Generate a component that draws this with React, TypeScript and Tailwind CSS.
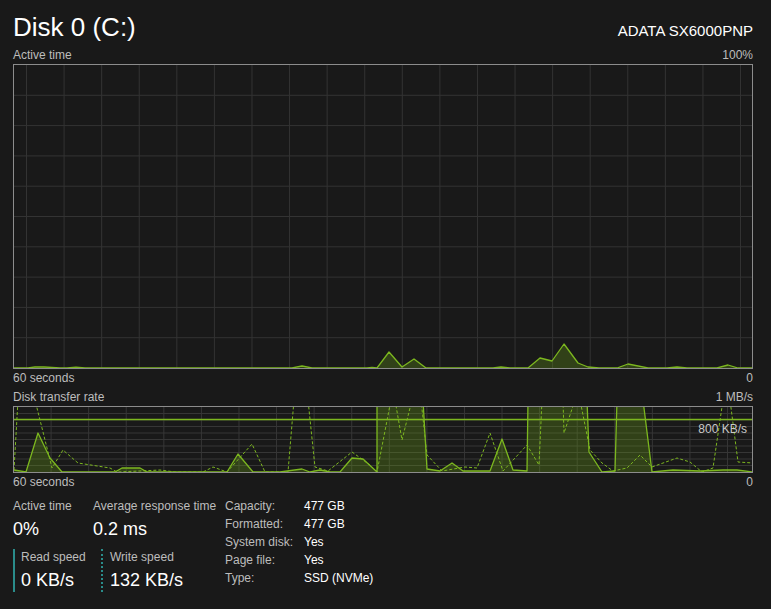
import React from "react";

type Pt = [number, number];

// page coords -> svg coords
const toSvg = (pts: Pt[], ox: number, oy: number) =>
  pts.map(([x, y]) => `${(x - ox).toFixed(1)},${(y - oy).toFixed(1)}`).join(" ");

const activePts: Pt[] = [
  [14, 368], [28, 368], [35, 367], [44, 367], [60, 368], [67, 368], [76, 367.2], [85, 368],
  [292, 368], [302, 366], [312, 368], [367, 368], [372, 367.3], [377, 368], [389, 352],
  [402, 367], [414, 359], [426, 368], [493, 368], [501, 367], [510, 368], [528, 368],
  [540, 358], [552, 361], [564, 344], [578, 363], [588, 367], [599, 368], [617, 368],
  [628, 364], [648, 368], [667, 368], [677, 367], [687, 368], [717, 368], [728, 365],
  [738, 368], [753, 368],
];

const readPts: Pt[] = [
  [14, 470], [26, 472], [38, 433], [50, 458], [62, 472], [115, 472], [122, 468], [140, 468],
  [147, 472], [227, 472], [238, 454], [253, 472], [280, 472], [302, 469], [310, 472],
  [320, 470], [330, 472], [340, 472], [352, 458], [363, 459], [377, 472], [377, 400],
  [423, 400], [427, 469], [440, 471], [452, 463], [463, 471], [490, 471], [502, 439],
  [513, 470], [527, 471], [528, 400], [587, 400], [589, 452], [602, 472], [615, 471],
  [617, 400], [643, 400], [652, 472], [673, 470], [700, 471], [723, 470], [737, 470],
  [753, 472],
];

const writePts: Pt[] = [
  [14, 470], [18, 400], [35, 400], [52, 468], [63, 450], [78, 463], [110, 468], [117, 472],
  [140, 471], [160, 470], [175, 472], [203, 472], [213, 467], [227, 472], [252, 444],
  [265, 472], [288, 472], [294, 400], [308, 400], [315, 467], [328, 471], [352, 452],
  [370, 465], [377, 472], [391, 400], [395, 400], [402, 440], [412, 400], [421, 400],
  [427, 455], [442, 471], [465, 467], [477, 468], [490, 433], [503, 471], [527, 445],
  [539, 465], [542, 400], [563, 400], [564, 433], [575, 400], [580, 400], [590, 450],
  [602, 463], [613, 471], [627, 468], [640, 455], [652, 467], [677, 458], [690, 462],
  [702, 472], [713, 468], [723, 400], [730, 400], [738, 462], [753, 463],
];

const GREEN = "#7cb71f";

function ActiveChart() {
  const w = 738;
  const h = 303;
  const line = toSvg(activePts, 14, 65);
  return (
    <div className="border border-[#8c8c8c] w-[740px] h-[305px]">
      <svg width={w} height={h} className="block">
        {Array.from({ length: 20 }, (_, k) => (
          <line key={"v" + k} x1={12.5 + 37.58 * k} x2={12.5 + 37.58 * k} y1={0} y2={h} stroke="#333" strokeWidth={1} />
        ))}
        {Array.from({ length: 9 }, (_, k) => (
          <line key={"h" + k} x1={0} x2={w} y1={30.3 * (k + 1)} y2={30.3 * (k + 1)} stroke="#333" strokeWidth={1} />
        ))}
        <polygon points={`0,${h} ${line} ${w},${h}`} fill="#6ea814" fillOpacity={0.28} />
        <polyline points={line} fill="none" stroke={GREEN} strokeWidth={1.3} strokeLinejoin="round" />
      </svg>
    </div>
  );
}

function TransferChart() {
  const w = 738;
  const h = 65;
  const read = toSvg(readPts, 14, 407);
  const write = toSvg(writePts, 14, 407);
  return (
    <div className="relative border border-[#8c8c8c] w-[740px] h-[67px]">
      <svg width={w} height={h} className="block overflow-hidden">
        {Array.from({ length: 20 }, (_, k) => (
          <line key={"v" + k} x1={37.58 * (k + 1) - 0.5} x2={37.58 * (k + 1) - 0.5} y1={0} y2={h} stroke="#363636" strokeWidth={1} />
        ))}
        {Array.from({ length: 9 }, (_, k) => (
          <line key={"h" + k} x1={0} x2={w} y1={6.5 * (k + 1)} y2={6.5 * (k + 1)} stroke="#363636" strokeWidth={1} />
        ))}
        <polygon points={`0,${h} ${read} ${w},${h}`} fill="#6ea814" fillOpacity={0.28} />
        <line x1={0} x2={w} y1={12.5} y2={12.5} stroke={GREEN} strokeWidth={1.5} />
        <polyline points={write} fill="none" stroke={GREEN} strokeWidth={1} strokeDasharray="3 2" />
        <polyline points={read} fill="none" stroke={GREEN} strokeWidth={1.3} strokeLinejoin="round" />
      </svg>
      <span className="absolute right-[5px] top-[14px] text-[12px] leading-[16px] text-[#c8c8c8]">800 KB/s</span>
    </div>
  );
}

const props: [string, string][] = [
  ["Capacity:", "477 GB"],
  ["Formatted:", "477 GB"],
  ["System disk:", "Yes"],
  ["Page file:", "Yes"],
  ["Type:", "SSD (NVMe)"],
];

export default function App() {
  return (
    <div className="w-[771px] h-[609px] overflow-hidden bg-[#191919] pl-[13px] pr-[18px] pt-[12px] font-['Segoe_UI','Liberation_Sans',sans-serif] text-white">
      {/* Header */}
      <div className="flex items-baseline justify-between h-[30px]">
        <h1 className="text-[26px] leading-[30px] font-normal">Disk 0 (C:)</h1>
        <span className="text-[15px] leading-[20px]">ADATA SX6000PNP</span>
      </div>

      <div className="flex items-end justify-between h-[22px] pb-[1px] text-[12px] leading-[16px] text-[#bdbdbd]">
        <span>Active time</span>
        <span>100%</span>
      </div>

      <ActiveChart />

      <div className="flex items-center justify-between h-[18px] text-[12px] leading-[16px] text-[#bdbdbd]">
        <span>60 seconds</span>
        <span>0</span>
      </div>
      <div className="flex items-center justify-between h-[19px] text-[12px] leading-[16px] text-[#bdbdbd]">
        <span>Disk transfer rate</span>
        <span>1 MB/s</span>
      </div>

      <TransferChart />

      <div className="flex items-center justify-between h-[18px] text-[12px] leading-[16px] text-[#bdbdbd]">
        <span>60 seconds</span>
        <span>0</span>
      </div>

      {/* Stats */}
      <div className="flex">
        <div className="w-[212px] pt-[7px]">
          <div className="flex">
            <div className="w-[80px]">
              <div className="text-[12px] leading-[16px] text-[#bdbdbd]">Active time</div>
              <div className="mt-[3px] text-[18px] leading-[24px]">0%</div>
            </div>
            <div>
              <div className="text-[12px] leading-[16px] text-[#bdbdbd]">Average response time</div>
              <div className="mt-[3px] text-[18px] leading-[24px]">0.2 ms</div>
            </div>
          </div>
          <div className="flex mt-[8px]">
            <div className="w-[88px] border-l-2 border-[#2a8c8a] pl-[6px]">
              <div className="text-[12px] leading-[16px] text-[#bdbdbd]">Read speed</div>
              <div className="mt-[3px] text-[18px] leading-[24px]">0 KB/s</div>
            </div>
            <div className="border-l-2 border-dotted border-[#2a8c8a] pl-[7px]">
              <div className="text-[12px] leading-[16px] text-[#bdbdbd]">Write speed</div>
              <div className="mt-[3px] text-[18px] leading-[24px]">132 KB/s</div>
            </div>
          </div>
        </div>

        <div className="pt-[6px] text-[12px] leading-[18px]">
          {props.map(([k, v]) => (
            <div key={k} className="flex">
              <span className="w-[79px] text-[#bdbdbd]">{k}</span>
              <span>{v}</span>
            </div>
          ))}
        </div>
      </div>
    </div>
  );
}
